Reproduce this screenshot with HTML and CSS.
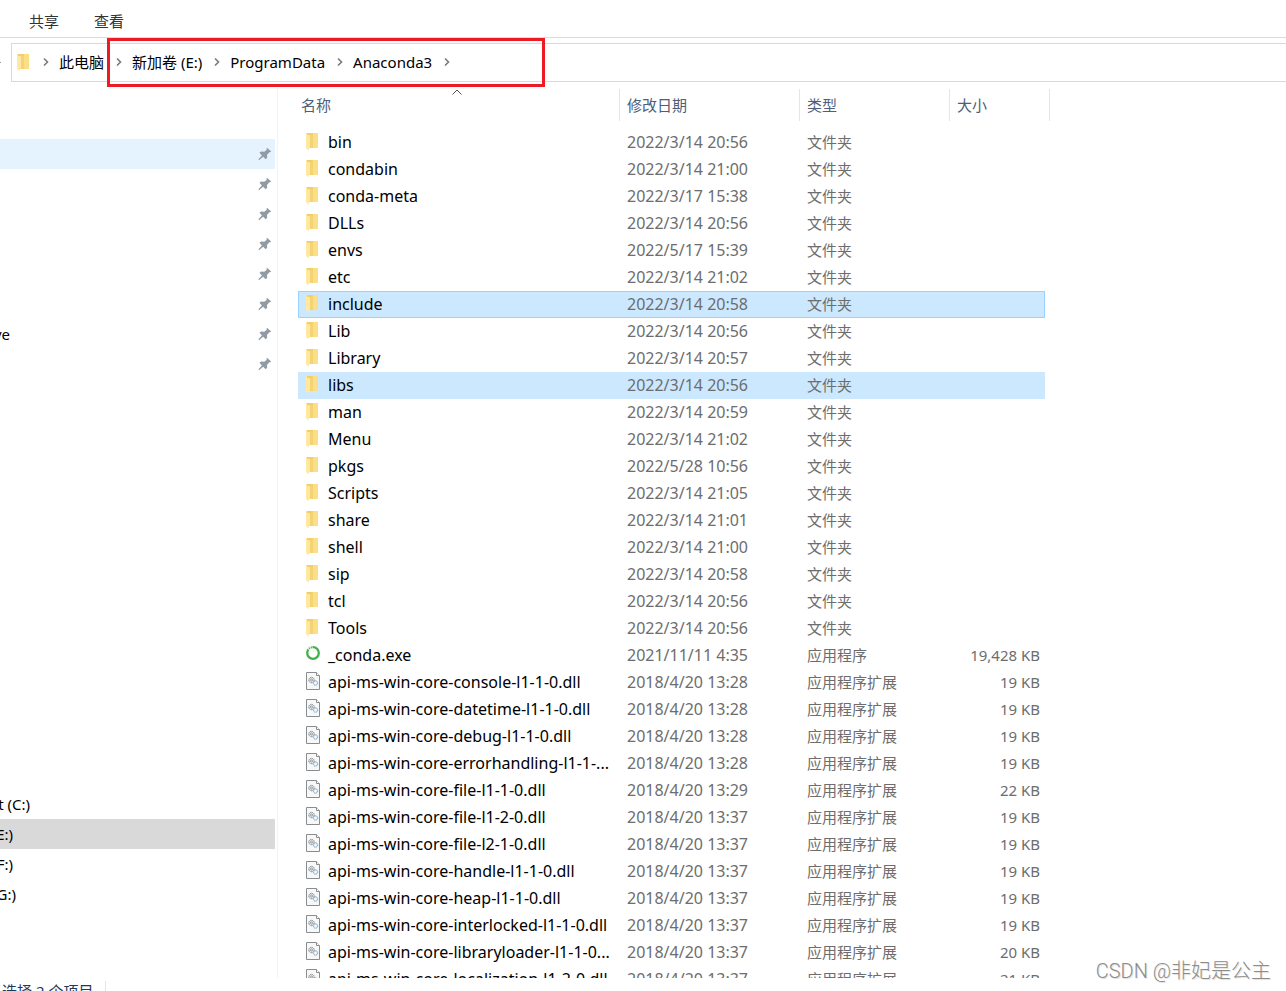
FILE: index.html
```
<!DOCTYPE html>
<html lang="zh-CN">
<head>
<meta charset="utf-8">
<title>Anaconda3</title>
<link rel="stylesheet" href="styles.css">
</head>
<body>
<svg class="defs" aria-hidden="true">
  <symbol id="folder" viewBox="0 0 14 18"><path d="M4 1h7v10h2v5H4z" fill="#f5d273"/><path d="M8 1h3v10h2v5H8z" fill="#fadf84"/><path d="M1 1h3v16l-1 1-2-2z" fill="#ffe8a0"/><path d="M2 1h11v2H2z" fill="#f3cf6b"/><path d="M8 1h5v10H8z" fill="#fadf84"/><path d="M4 3l1 1v11l-1 1z" fill="#fbe7ac"/></symbol>
  <symbol id="dll" viewBox="0 0 16 20"><path d="M1.500 1.500h10l3 3v14h-13z" fill="#f8f8f8" stroke="#8a8d90"/><path d="M11.500 1.500v3h3" fill="#fff" stroke="#8a8d90"/><circle cx="6.500" cy="9" r="2.700" fill="#e4e7e9" stroke="#7d8388" stroke-dasharray="1.300 .5"/><circle cx="6.500" cy="9" r="1" fill="#fff" stroke="#7d8388" stroke-width=".8"/><circle cx="10.500" cy="12" r="2.200" fill="#e2f0fa" stroke="#6a9fc8" stroke-dasharray="1.300 .5"/><circle cx="10.500" cy="12" r=".7" fill="#fff"/></symbol>
  <symbol id="ring" viewBox="0 0 16 20"><circle cx="8" cy="9" r="5.800" fill="none" stroke="#43b049" stroke-width="2.300"/><path d="M3.400 5.500A5.800 5.800 0 0 1 7.500 3.200" fill="none" stroke="#fff" stroke-width="3" stroke-dasharray="1 1"/></symbol>
  <symbol id="pin" viewBox="0 0 14 14"><path d="M9 .8l4.200 3.700-1.100.8-.8-.1-2.300 2.700.2 2.800-1.500 1.500-2.600-2.500L1.300 13l-.8-.2.200-.8 3.200-3.600-2.400-2.700L3 4.600l3.300.2 2.500-2.100-.3-1z" fill="#919ba3"/></symbol>
  <symbol id="chev" viewBox="0 0 8 10"><path d="M2 1.500l3.500 3.500L2 8.500" fill="none" stroke="#7a7a7a" stroke-width="1.600"/></symbol>
</svg>
<div class="window">
  <div class="ribbon" role="tablist">
    <button class="tab" role="tab">共享</button>
    <button class="tab" role="tab">查看</button>
  </div>
  <div class="address-row">
    <span class="nav-dot"></span>
    <nav class="address" aria-label="地址">
      <svg class="folder"><use href="#folder"/></svg>
      <svg class="chev"><use href="#chev"/></svg>
      <button class="crumb">此电脑</button>
      <svg class="chev"><use href="#chev"/></svg>
      <button class="crumb">新加卷 (E:)</button>
      <svg class="chev"><use href="#chev"/></svg>
      <button class="crumb">ProgramData</button>
      <svg class="chev"><use href="#chev"/></svg>
      <button class="crumb">Anaconda3</button>
      <svg class="chev"><use href="#chev"/></svg>
    </nav>
    <div class="marker"></div>
  </div>
  <div class="panes">
    <aside class="sidebar">
      <ul class="tree">
        <li class="node hover"><svg class="pin"><use href="#pin"/></svg></li>
        <li class="node"><svg class="pin"><use href="#pin"/></svg></li>
        <li class="node"><svg class="pin"><use href="#pin"/></svg></li>
        <li class="node"><svg class="pin"><use href="#pin"/></svg></li>
        <li class="node"><svg class="pin"><use href="#pin"/></svg></li>
        <li class="node"><svg class="pin"><use href="#pin"/></svg></li>
        <li class="node"><span class="tail w10">ve</span><svg class="pin"><use href="#pin"/></svg></li>
        <li class="node"><svg class="pin"><use href="#pin"/></svg></li>
      </ul>
      <ul class="tree drives">
        <li class="node"><span class="tail w30">t (C:)</span></li>
        <li class="node current"><span class="tail w13">E:)</span></li>
        <li class="node"><span class="tail w13">F:)</span></li>
        <li class="node"><span class="tail w16">G:)</span></li>
      </ul>
    </aside>
    <main class="files">
      <table class="list">
        <colgroup><col class="c-name"><col class="c-date"><col class="c-type"><col class="c-size"><col class="c-end"></colgroup>
        <thead><tr><th>名称<svg class="sort" viewBox="0 0 10 6"><path d="M.5 5.500L5 1l4.500 4.500" fill="none" stroke="#555"/></svg></th><th>修改日期</th><th>类型</th><th colspan="2">大小</th></tr></thead>
        <tbody>
<tr><td><svg class="folder"><use href="#folder"/></svg>bin</td><td>2022/3/14 20:56</td><td>文件夹</td><td></td></tr>
<tr><td><svg class="folder"><use href="#folder"/></svg>condabin</td><td>2022/3/14 21:00</td><td>文件夹</td><td></td></tr>
<tr><td><svg class="folder"><use href="#folder"/></svg>conda-meta</td><td>2022/3/17 15:38</td><td>文件夹</td><td></td></tr>
<tr><td><svg class="folder"><use href="#folder"/></svg>DLLs</td><td>2022/3/14 20:56</td><td>文件夹</td><td></td></tr>
<tr><td><svg class="folder"><use href="#folder"/></svg>envs</td><td>2022/5/17 15:39</td><td>文件夹</td><td></td></tr>
<tr><td><svg class="folder"><use href="#folder"/></svg>etc</td><td>2022/3/14 21:02</td><td>文件夹</td><td></td></tr>
<tr class="selected focused"><td><svg class="folder"><use href="#folder"/></svg>include</td><td>2022/3/14 20:58</td><td>文件夹</td><td></td></tr>
<tr><td><svg class="folder"><use href="#folder"/></svg>Lib</td><td>2022/3/14 20:56</td><td>文件夹</td><td></td></tr>
<tr><td><svg class="folder"><use href="#folder"/></svg>Library</td><td>2022/3/14 20:57</td><td>文件夹</td><td></td></tr>
<tr class="selected"><td><svg class="folder"><use href="#folder"/></svg>libs</td><td>2022/3/14 20:56</td><td>文件夹</td><td></td></tr>
<tr><td><svg class="folder"><use href="#folder"/></svg>man</td><td>2022/3/14 20:59</td><td>文件夹</td><td></td></tr>
<tr><td><svg class="folder"><use href="#folder"/></svg>Menu</td><td>2022/3/14 21:02</td><td>文件夹</td><td></td></tr>
<tr><td><svg class="folder"><use href="#folder"/></svg>pkgs</td><td>2022/5/28 10:56</td><td>文件夹</td><td></td></tr>
<tr><td><svg class="folder"><use href="#folder"/></svg>Scripts</td><td>2022/3/14 21:05</td><td>文件夹</td><td></td></tr>
<tr><td><svg class="folder"><use href="#folder"/></svg>share</td><td>2022/3/14 21:01</td><td>文件夹</td><td></td></tr>
<tr><td><svg class="folder"><use href="#folder"/></svg>shell</td><td>2022/3/14 21:00</td><td>文件夹</td><td></td></tr>
<tr><td><svg class="folder"><use href="#folder"/></svg>sip</td><td>2022/3/14 20:58</td><td>文件夹</td><td></td></tr>
<tr><td><svg class="folder"><use href="#folder"/></svg>tcl</td><td>2022/3/14 20:56</td><td>文件夹</td><td></td></tr>
<tr><td><svg class="folder"><use href="#folder"/></svg>Tools</td><td>2022/3/14 20:56</td><td>文件夹</td><td></td></tr>
<tr><td><svg class="ring"><use href="#ring"/></svg>_conda.exe</td><td>2021/11/11 4:35</td><td>应用程序</td><td>19,428 KB</td></tr>
<tr><td><svg class="dll"><use href="#dll"/></svg>api-ms-win-core-console-l1-1-0.dll</td><td>2018/4/20 13:28</td><td>应用程序扩展</td><td>19 KB</td></tr>
<tr><td><svg class="dll"><use href="#dll"/></svg>api-ms-win-core-datetime-l1-1-0.dll</td><td>2018/4/20 13:28</td><td>应用程序扩展</td><td>19 KB</td></tr>
<tr><td><svg class="dll"><use href="#dll"/></svg>api-ms-win-core-debug-l1-1-0.dll</td><td>2018/4/20 13:28</td><td>应用程序扩展</td><td>19 KB</td></tr>
<tr><td><svg class="dll"><use href="#dll"/></svg>api-ms-win-core-errorhandling-l1-1-...</td><td>2018/4/20 13:28</td><td>应用程序扩展</td><td>19 KB</td></tr>
<tr><td><svg class="dll"><use href="#dll"/></svg>api-ms-win-core-file-l1-1-0.dll</td><td>2018/4/20 13:29</td><td>应用程序扩展</td><td>22 KB</td></tr>
<tr><td><svg class="dll"><use href="#dll"/></svg>api-ms-win-core-file-l1-2-0.dll</td><td>2018/4/20 13:37</td><td>应用程序扩展</td><td>19 KB</td></tr>
<tr><td><svg class="dll"><use href="#dll"/></svg>api-ms-win-core-file-l2-1-0.dll</td><td>2018/4/20 13:37</td><td>应用程序扩展</td><td>19 KB</td></tr>
<tr><td><svg class="dll"><use href="#dll"/></svg>api-ms-win-core-handle-l1-1-0.dll</td><td>2018/4/20 13:37</td><td>应用程序扩展</td><td>19 KB</td></tr>
<tr><td><svg class="dll"><use href="#dll"/></svg>api-ms-win-core-heap-l1-1-0.dll</td><td>2018/4/20 13:37</td><td>应用程序扩展</td><td>19 KB</td></tr>
<tr><td><svg class="dll"><use href="#dll"/></svg>api-ms-win-core-interlocked-l1-1-0.dll</td><td>2018/4/20 13:37</td><td>应用程序扩展</td><td>19 KB</td></tr>
<tr><td><svg class="dll"><use href="#dll"/></svg>api-ms-win-core-libraryloader-l1-1-0...</td><td>2018/4/20 13:37</td><td>应用程序扩展</td><td>20 KB</td></tr>
<tr><td><svg class="dll"><use href="#dll"/></svg>api-ms-win-core-localization-l1-2-0.dll</td><td>2018/4/20 13:37</td><td>应用程序扩展</td><td>21 KB</td></tr>
        </tbody>
      </table>
    </main>
  </div>
  <footer class="status"><span class="count">已选择 2 个项目</span></footer>
  <div class="watermark">CSDN @非妃是公主</div>
</div>
</body>
</html>
```
FILE: styles.css
```
* { box-sizing: border-box; }
body {
  margin: 0;
  background: #fff;
  color: #000;
  font: 15px/20px "Noto Sans", "Noto Sans CJK SC", sans-serif;
}
button { border: 0; padding: 0; background: none; font: inherit; color: inherit; }
.defs { position: absolute; width: 0; height: 0; }
.window {
  position: relative;
  display: flex;
  flex-direction: column;
  height: 100vh;
  overflow: hidden;
}

.ribbon {
  display: flex;
  gap: 35px;
  height: 38px;
  padding: 4px 0 0 29px;
  border-bottom: 1px solid #dadbdc;
  color: #333;
  flex: none;
}

.address-row {
  position: relative;
  display: flex;
  align-items: center;
  height: 49px;
  flex: none;
}
.nav-dot { width: 1px; height: 1px; margin-right: 10px; background: #999; }
.address {
  flex: 1;
  display: flex;
  align-items: center;
  height: 39px;
  padding: 0 0 2px 4px;
  border: 1px solid #d9d9d9;
  border-right: 0;
}
.address .folder { margin-right: 12px; }
.crumb { margin: 0 11px 0 9px; }
.chev { width: 8px; height: 10px; }
.marker {
  position: absolute;
  left: 107px;
  top: 0;
  width: 438px;
  height: 49px;
  border: 3px solid #ed1c24;
}

.panes { flex: 1; display: flex; min-height: 0; padding-top: 2px; }
.sidebar {
  width: 278px;
  flex: none;
  padding: 50px 2px 0 0;
  border-right: 1px solid #f3f3f3;
}
.tree { list-style: none; margin: 0; padding: 0; }
.drives { margin-top: 410px; }
.node {
  display: flex;
  align-items: center;
  height: 30px;
  padding-right: 3px;
  line-height: 20px;
}
.node.hover { background: #e5f3ff; }
.node.current { background: #d9d9d9; }
.tail { display: flex; justify-content: flex-end; overflow: hidden; white-space: nowrap; }
.w10 { width: 10px; }
.w13 { width: 13px; }
.w16 { width: 16px; }
.w30 { width: 30px; }
.pin { width: 14px; height: 14px; margin-left: auto; }

.files { flex: 1; overflow: hidden; padding-left: 20px; }
.list { width: 752px; table-layout: fixed; border-collapse: separate; border-spacing: 0; }
.c-name { width: 322px; }
.c-date { width: 180px; }
.c-type { width: 150px; }
.c-size { width: 95px; }
.list th {
  position: relative;
  height: 32px;
  padding: 0 7px;
  border-right: 1px solid #e5e5e5;
  color: #4c607a;
  font-weight: 400;
  text-align: left;
}
.list th:first-child { padding-left: 3px; }
.sort { position: absolute; left: 154px; top: 0; width: 10px; height: 6px; }
.list tbody::before { content: ""; display: block; height: 8px; }
.list td {
  height: 27px;
  padding: 0 0 0 7px;
  color: #6d6d6d;
  line-height: 27px;
  white-space: nowrap;
}
.list td:first-child { color: #000; font-size: 16px; }
.list td:nth-child(2) { font-size: 16px; }
.list td:nth-child(4) { padding: 0 5px 0 0; text-align: right; }
.folder { width: 14px; height: 18px; }
.ring, .dll { width: 16px; height: 20px; }
td svg { margin-right: 7px; vertical-align: -3px; }
td .folder { margin-right: 9px; vertical-align: -2px; }
.selected td { background: #cce8ff; }
.focused td { box-shadow: inset 0 1px #99d1ff, inset 0 -1px #99d1ff; }
.focused td:first-child { box-shadow: inset 0 1px #99d1ff, inset 0 -1px #99d1ff, inset 1px 0 #99d1ff; }
.focused td:last-child { box-shadow: inset 0 1px #99d1ff, inset 0 -1px #99d1ff, inset -1px 0 #99d1ff; }

.status { height: 13px; flex: none; padding-top: 3px; overflow: hidden; color: #1e395b; }
.count {
  display: block;
  width: 119px;
  margin-left: -13px;
  border-right: 1px solid #e5e5e5;
  white-space: nowrap;
}
.watermark {
  position: absolute;
  right: 15px;
  bottom: 6px;
  color: #8c8c8c;
  font: 300 20px/28px Roboto, "Noto Sans CJK SC", sans-serif;
  text-shadow: 1px 1px 1px #ddd;
}
```
